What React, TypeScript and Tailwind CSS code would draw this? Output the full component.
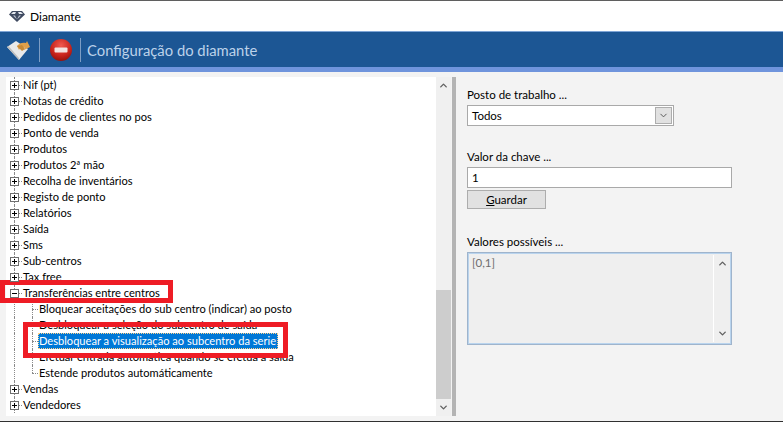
import { ChevronDown, ChevronUp } from "lucide-react";

const topNodes = [
  "Nif (pt)",
  "Notas de crédito",
  "Pedidos de clientes no pos",
  "Ponto de venda",
  "Produtos",
  "Produtos 2ª mão",
  "Recolha de inventários",
  "Registo de ponto",
  "Relatórios",
  "Saída",
  "Sms",
  "Sub-centros",
  "Tax free",
];

const children = [
  "Bloquear aceitações do sub centro (indicar) ao posto",
  "Desbloquear a seleção do subcentro de saída",
  "Desbloquear a visualização ao subcentro da serie",
  "Efetuar entrada automática quando se efetua a saída",
  "Estende produtos automáticamente",
];

function PlusBox({ open = false }: { open?: boolean }) {
  return (
    <span className="relative z-10 flex h-[9px] w-[9px] shrink-0 items-center justify-center border border-[#6f6f6f] bg-white">
      <span className="absolute h-px w-[5px] bg-black" />
      {!open && <span className="absolute h-[5px] w-px bg-black" />}
    </span>
  );
}

function RootRow({ label, open }: { label: string; open?: boolean }) {
  return (
    <div className="relative flex h-4 items-center pl-[4px]">
      <span className="absolute left-[8px] top-0 h-4 border-l border-dotted border-[#8a8a8a]" />
      <PlusBox open={open} />
      <span className="w-[3px] border-t border-dotted border-[#8a8a8a]" />
      <span className="pl-px text-black">{label}</span>
    </div>
  );
}

function ChildRow({ label, selected, last }: { label: string; selected?: boolean; last?: boolean }) {
  return (
    <div className="relative flex h-4 items-center pl-[26px]">
      <span className="absolute left-[8px] top-0 h-4 border-l border-dotted border-[#8a8a8a]" />
      <span className={`absolute left-[26px] top-0 border-l border-dotted border-[#8a8a8a] ${last ? "h-2" : "h-4"}`} />
      <span className="w-[6px] border-t border-dotted border-[#8a8a8a]" />
      <span
        className={
          selected
            ? "border border-dotted border-[#ffd28a] bg-[#0078d7] pr-px leading-[14px] text-white"
            : "pl-px text-black"
        }
      >
        {label}
      </span>
    </div>
  );
}

function Diamond() {
  return (
    <svg width="16" height="11" viewBox="0 0 16 11">
      <path d="M3 0h10l3 3.500L8 11 0 3.500z" fill="#3f4a60" />
      <path d="M4 1h3L6 3H2zM9 1h3l2 2h-4z" fill="#e4e8ef" />
      <path d="M4 4.500h2l2 4zM10 4.500h2l-4 4z" fill="#c3cad6" />
    </svg>
  );
}

function EraserIcon() {
  return (
    <svg width="24" height="20" viewBox="0 0 24 20">
      <path d="M0 7 9 1l12 8-9 11z" fill="#e9e9e9" />
      <path d="M0 7l12 13v-2L1.500 6z" fill="#bdbdbd" />
      <path d="M10 6c2-3 6-4 9-3l1-2 3 6-6 3 1-2c-3-1-5 0-6 2z" fill="#e0a04a" />
      <path d="M10 6l5 5 3-2-3-4z" fill="#c98a35" />
    </svg>
  );
}

function StopIcon() {
  return (
    <svg width="22" height="22" viewBox="0 0 22 22">
      <defs>
        <radialGradient id="stopRed" cx="50%" cy="30%" r="75%">
          <stop offset="0%" stopColor="#f05a50" />
          <stop offset="60%" stopColor="#c9241c" />
          <stop offset="100%" stopColor="#8c0f0a" />
        </radialGradient>
      </defs>
      <circle cx="11" cy="11" r="11" fill="url(#stopRed)" />
      <rect x="4.500" y="8.500" width="13" height="5" rx="1" fill="#f3e3e0" />
    </svg>
  );
}

export default function App() {
  return (
    <div
      className="relative flex h-[422px] w-[783px] flex-col overflow-hidden bg-[#f3f3f3] text-[11.5px] leading-4"
      style={{ fontFamily: 'Lato, "Liberation Sans", sans-serif' }}
    >
      <div className="h-px shrink-0 bg-[#5f5f5f]" />
      <div className="flex h-[30px] shrink-0 items-center gap-[5px] bg-white pl-[9px] pt-px">
        <Diamond />
        <span className="text-[12px] text-black">Diamante</span>
      </div>

      <div className="flex h-[36px] shrink-0 items-center border-t border-[#7fa5d6] bg-[#1c5694] pl-[7px]">
        <EraserIcon />
        <span className="ml-[8px] h-[24px] w-px bg-[#7d9dc4]" />
        <span className="ml-[10px]"><StopIcon /></span>
        <span className="ml-[8px] h-[24px] w-px bg-[#7d9dc4]" />
        <span className="ml-[6px] text-[14.8px] text-[#bcd2ea]">Configuração do diamante</span>
      </div>
      <div className="h-[5px] shrink-0 bg-[#6f94dc]" />

      <div className="flex min-h-0 flex-1 pb-[6px] pl-[6px] pt-[5px]">
        <div className="flex w-[445px] shrink-0 bg-white">
          <div className="w-[430px] overflow-hidden text-[11.1px]">
            {topNodes.map((n) => (
              <RootRow key={n} label={n} />
            ))}
            <RootRow label="Transferências entre centros" open />
            {children.map((c, i) => (
              <ChildRow key={c} label={c} selected={i === 2} last={i === 4} />
            ))}
            <RootRow label="Vendas" />
            <RootRow label="Vendedores" />
          </div>
          <div className="flex w-[15px] shrink-0 flex-col bg-[#f0f0f0]">
            <div className="flex h-[17px] shrink-0 items-center justify-center">
              <ChevronUp size={11} strokeWidth={3} className="text-[#606060]" />
            </div>
            <div className="flex-1" />
            <div className="h-[109px] shrink-0 bg-[#cdcdcd]" />
            <div className="flex h-[17px] shrink-0 items-center justify-center">
              <ChevronDown size={11} strokeWidth={3} className="text-[#606060]" />
            </div>
          </div>
        </div>

        <div className="ml-px w-[4px] shrink-0 bg-[#b4b4b4]" />

        <div className="flex flex-1 flex-col pl-[11px] pt-[10px] text-black">
          <div className="h-4">Posto de trabalho ...</div>
          <div className="mt-[2px] flex h-[21px] w-[207px] items-center justify-between border border-[#a9a9a9] bg-white pl-[4px] pr-px">
            <span>Todos</span>
            <span className="flex h-[17px] w-[17px] items-center justify-center border border-[#adadad] bg-[#e1e1e1]">
              <ChevronDown size={11} className="text-[#505050]" />
            </span>
          </div>
          <div className="mt-[23px] h-4">Valor da chave ...</div>
          <div className="mt-[2px] flex h-[21px] w-[265px] items-center border border-[#a9a9a9] bg-white pl-[4px]">1</div>
          <button className="mt-[2px] h-[19px] w-[79px] border border-[#adadad] bg-[#e1e1e1] text-black">
            <span className="underline">G</span>uardar
          </button>
          <div className="mt-[25px] h-4">Valores possíveis ...</div>
          <div className="mt-[2px] flex h-[93px] w-[265px] border border-[#9fb4cc] bg-[#efefef] shadow-[inset_0_0_0_1px_#b9d4ee]">
            <div className="flex-1 pl-[4px] pt-[2px] text-[#6d6d6d]">[0,1]</div>
            <div className="my-[2px] mr-[1px] flex w-[17px] flex-col items-center justify-between border-l border-white py-[3px]">
              <ChevronUp size={11} strokeWidth={3} className="text-[#606060]" />
              <ChevronDown size={11} strokeWidth={3} className="text-[#606060]" />
            </div>
          </div>
        </div>
      </div>

      <div className="absolute bottom-0 left-0 h-px w-full bg-[#303030]" />

      {/* red marks drawn over the tree */}
      <div className="pointer-events-none absolute left-0 top-[280px] h-[23px] w-[173px] border-[5px] border-[#ee1c25]" />
      <div className="pointer-events-none absolute left-[23px] top-[322px] h-[36px] w-[265px] border-[5px] border-[#ee1c25]" />
    </div>
  );
}
